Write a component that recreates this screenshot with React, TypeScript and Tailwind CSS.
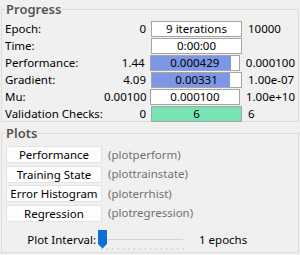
import type { ReactNode } from "react"

type Row = {
  label: string
  start: string
  value: string
  end: string
  fill?: number
  fillColor?: string
}

const rows: Row[] = [
  { label: "Epoch:", start: "0", value: "9 iterations", end: "10000" },
  { label: "Time:", start: "", value: "0:00:00", end: "" },
  { label: "Performance:", start: "1.44", value: "0.000429", end: "0.000100", fill: 91, fillColor: "bg-[#7b97e6]" },
  { label: "Gradient:", start: "4.09", value: "0.00331", end: "1.00e-07", fill: 88, fillColor: "bg-[#7b97e6]" },
  { label: "Mu:", start: "0.00100", value: "0.000100", end: "1.00e+10" },
  { label: "Validation Checks:", start: "0", value: "6", end: "6", fill: 100, fillColor: "bg-[#7ae3b4]" },
]

const plots = [
  { name: "Performance", fn: "(plotperform)" },
  { name: "Training State", fn: "(plottrainstate)" },
  { name: "Error Histogram", fn: "(ploterrhist)" },
  { name: "Regression", fn: "(plotregression)" },
]

function Group({ title, className, children }: { title: string; className: string; children: ReactNode }) {
  return (
    <fieldset className={`border border-[#dcdcdc] mx-[1px] px-[3px] min-w-0 ${className}`}>
      <legend className="px-[1px] ml-0 text-[13px] leading-[16px] font-semibold text-[#555555]">{title}</legend>
      {children}
    </fieldset>
  )
}

export default function App() {
  return (
    <div className="w-[300px] h-[255px] overflow-hidden bg-[#f0f0f0] pt-[1px] text-[11.5px] text-black font-['Noto_Sans',sans-serif]">
      <Group title="Progress" className="h-[121px] pt-[4px]">
        <div className="flex flex-col gap-[1px]">
          {rows.map((r) => (
            <div key={r.label} className="flex items-center h-[16px] leading-[16px]">
              <span className="w-[100px] whitespace-nowrap">{r.label}</span>
              <span className="w-[41px] text-right">{r.start}</span>
              <div className="relative ml-[5px] w-[91px] h-[16px] border border-[#a5a5a5] bg-white">
                {r.fill !== undefined && (
                  <div className={`absolute left-0 top-0 bottom-0 ${r.fillColor}`} style={{ width: `${r.fill}%` }} />
                )}
                <div className="relative text-center leading-[14px]">{r.value}</div>
              </div>
              <span className="ml-[6px] whitespace-nowrap">{r.end}</span>
            </div>
          ))}
        </div>
      </Group>

      <Group title="Plots" className="h-[128px] mt-[3px] pt-[5px]">
        <div className="flex flex-col gap-[2.5px]">
          {plots.map((p) => (
            <div key={p.name} className="flex items-center h-[17px]">
              <button
                type="button"
                className="w-[96px] h-[17px] ml-[1px] bg-[#fdfdfd] border border-[#e3e3e3] text-center leading-[15px] whitespace-nowrap"
              >
                {p.name}
              </button>
              <span className="ml-[6px] text-[#707070] whitespace-nowrap">{p.fn}</span>
            </div>
          ))}
        </div>
        <div className="flex items-center mt-[7px] h-[22px]">
          <span className="w-[91px] text-right whitespace-nowrap">Plot Interval:</span>
          <svg width="92" height="22" viewBox="0 0 92 22" className="ml-[1px]">
            <line x1="10" y1="10.5" x2="86" y2="10.5" stroke="#d4d4d4" strokeWidth="1" />
            {Array.from({ length: 16 }).map((_, i) => (
              <line key={i} x1={5 + i * 5.4} y1="19" x2={5 + i * 5.4} y2="21" stroke="#c8c8c8" strokeWidth="1" />
            ))}
            <path d="M1 1 H10 V15 L5.5 19.5 L1 15 Z" fill="#0f6fd6" />
          </svg>
          <span className="ml-[10px] whitespace-nowrap">1 epochs</span>
        </div>
      </Group>
    </div>
  )
}
